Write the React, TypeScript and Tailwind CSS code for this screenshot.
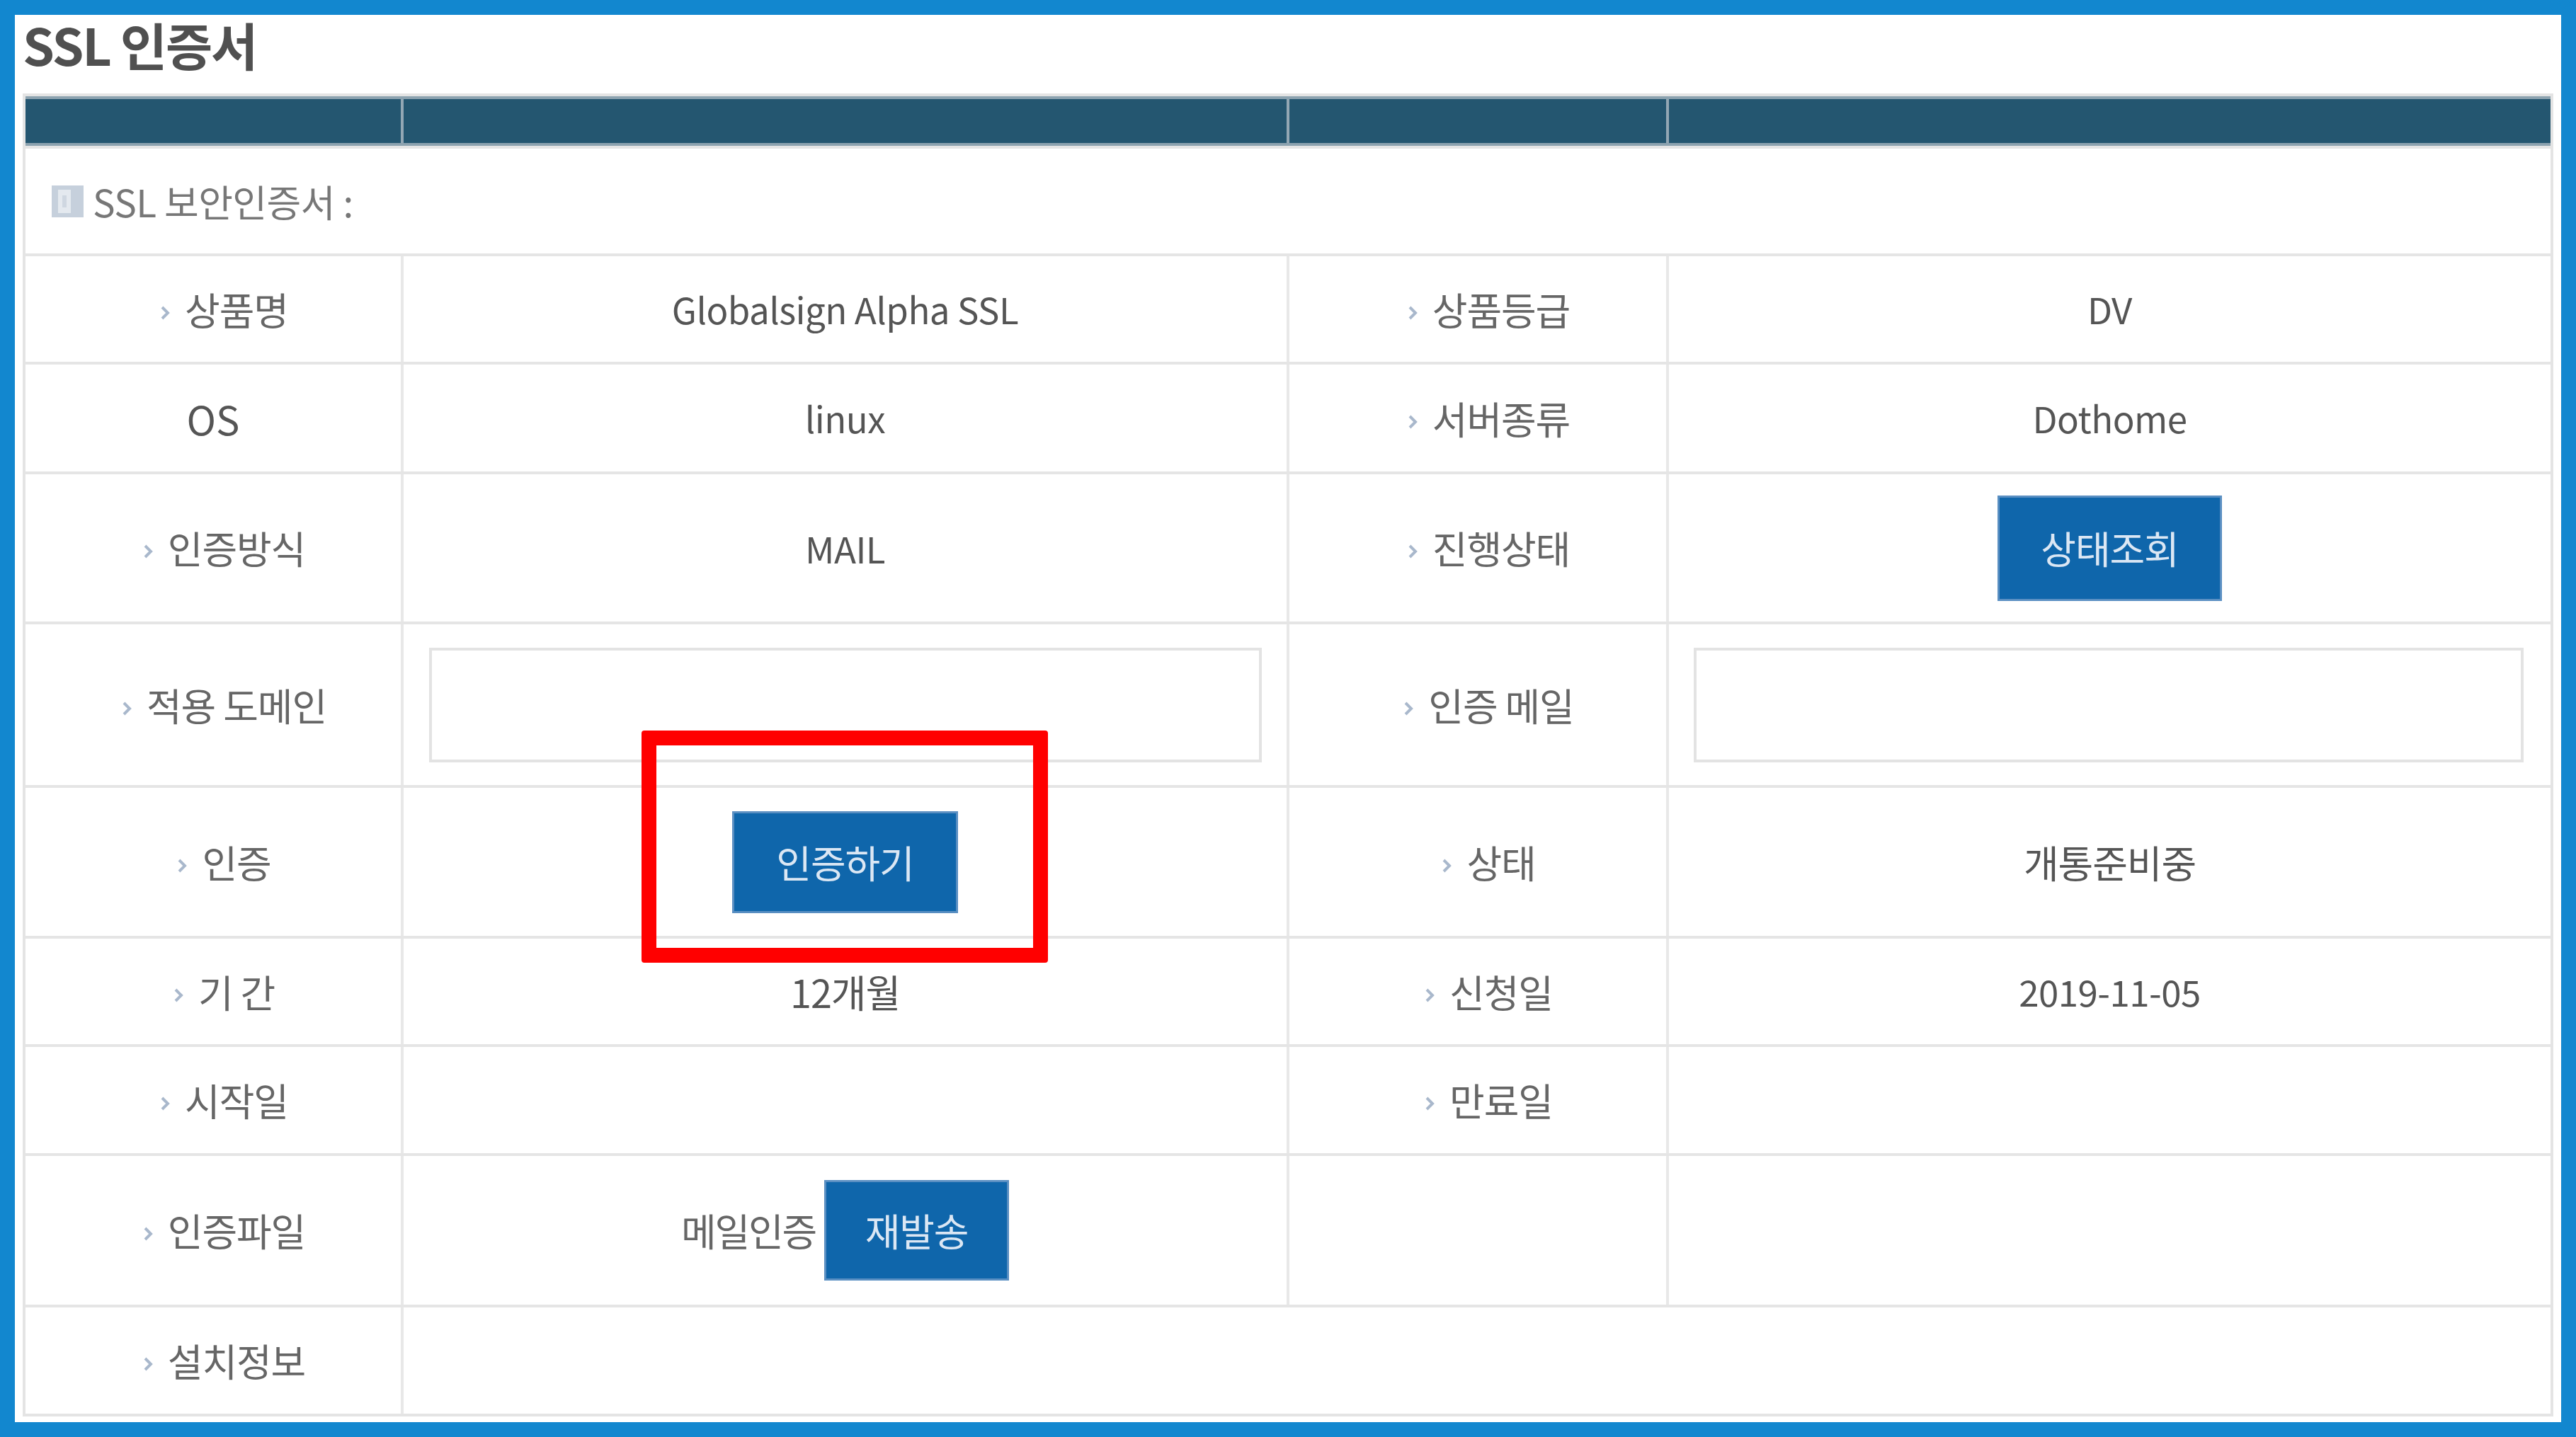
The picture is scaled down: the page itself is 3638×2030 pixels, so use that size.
const cols = 'grid grid-cols-[530px_1251px_536px_1fr]'

function Chevron() {
  return (
    <svg width="16" height="24" viewBox="0 0 16 24" className="mt-[10px] shrink-0">
      <path d="M4 4 L12 12 L4 20" stroke="#a9b8cc" strokeWidth="4" fill="none" />
    </svg>
  )
}

function Label({ text, arrow = true }: { text: string; arrow?: boolean }) {
  return (
    <div className={`flex items-center justify-center ${arrow ? 'pl-[30px]' : ''}`}>
      {arrow && <Chevron />}
      <span
        className={`${arrow ? 'ml-[20px]' : ''} text-[54px] tracking-[-0.02em] text-[#666] leading-none whitespace-pre`}
      >
        {text}
      </span>
    </div>
  )
}

function Value({ text, latin = false }: { text: string; latin?: boolean }) {
  return (
    <div className="flex items-center justify-center border-l-[4px] border-[#e8e8e8]">
      <span
        className={`${latin ? 'text-[51px] tracking-[-0.01em]' : 'text-[54px] tracking-[-0.02em]'} text-[#555] leading-none`}
      >
        {text}
      </span>
    </div>
  )
}

function Cell({ children }: { children?: React.ReactNode }) {
  return (
    <div className="flex items-center justify-center border-l-[4px] border-[#e8e8e8]">{children}</div>
  )
}

function BlueButton({ text, size }: { text: string; size: string }) {
  return (
    <button
      className={`${size} flex items-center justify-center bg-[#0f66ab] border-[3px] border-[#5a8fc2] text-[#dbe7f4] text-[54px] tracking-[-0.02em] leading-none`}
    >
      {text}
    </button>
  )
}

function InputBox() {
  return <div className="w-full h-[162px] border-[4px] border-[#e3e3e3] bg-white" />
}

export default function App() {
  return (
    <div className="relative w-[3638px] h-[2030px] border-[21px] border-[#1287cf] bg-white font-['Noto_Sans_CJK_KR',sans-serif]">
      <div className="px-[11px]">
        <div className="h-[111px] pt-[5px]">
          <h1 className="text-[72px] font-bold leading-none tracking-[-0.03em] text-[#505050]">SSL 인증서</h1>
        </div>

        <div className="border-[4px] border-[#e4e4e4]">
          {/* header bar */}
          <div className={`${cols} h-[70px] bg-[#245670] border-y-[4px] border-[#8ca2af]`}>
            <div />
            <div className="border-l-[4px] border-[#93a7b4]" />
            <div className="border-l-[4px] border-[#93a7b4]" />
            <div className="border-l-[4px] border-[#93a7b4]" />
          </div>

          <div className="h-[152px] border-t-[4px] border-[#e5e5e5] flex items-center pl-[37px]">
            <svg width="45" height="45" viewBox="0 0 45 45" className="shrink-0">
              <rect x="0" y="0" width="45" height="45" fill="#c6d0dc" />
              <rect x="9" y="6" width="18" height="33" fill="#e4e9ef" />
              <rect x="15" y="14" width="6" height="17" fill="#cfd7e1" />
            </svg>
            <span className="ml-[13px] text-[53px] tracking-[-0.01em] text-[#777] leading-none">SSL 보안인증서 :</span>
          </div>

          <div className={`${cols} h-[153px] border-t-[4px] border-[#e5e5e5]`}>
            <Label text="상품명" />
            <Value text="Globalsign Alpha SSL" latin />
            <Cell><Label text="상품등급" /></Cell>
            <Value text="DV" latin />
          </div>

          <div className={`${cols} h-[155px] border-t-[4px] border-[#e5e5e5]`}>
            <div className="flex items-center justify-center">
              <span className="text-[56px] text-[#555] leading-none">OS</span>
            </div>
            <Value text="linux" latin />
            <Cell><Label text="서버종류" /></Cell>
            <Value text="Dothome" latin />
          </div>

          <div className={`${cols} h-[212px] border-t-[4px] border-[#e5e5e5]`}>
            <Label text="인증방식" />
            <Value text="MAIL" latin />
            <Cell><Label text="진행상태" /></Cell>
            <Cell><BlueButton text="상태조회" size="w-[317px] h-[149px]" /></Cell>
          </div>

          <div className={`${cols} h-[231px] border-t-[4px] border-[#e5e5e5]`}>
            <Label text="적용 도메인" />
            <div className="flex items-center border-l-[4px] border-[#e8e8e8] pl-[36px] pr-[35px]">
              <InputBox />
            </div>
            <Cell><Label text="인증 메일" /></Cell>
            <div className="flex items-center border-l-[4px] border-[#e8e8e8] pl-[35px] pr-[38px]">
              <InputBox />
            </div>
          </div>

          <div className={`${cols} h-[213px] border-t-[4px] border-[#e5e5e5]`}>
            <Label text="인증" />
            <Cell><BlueButton text="인증하기" size="w-[319px] h-[144px]" /></Cell>
            <Cell><Label text="상태" /></Cell>
            <Value text="개통준비중" />
          </div>

          <div className={`${cols} h-[153px] border-t-[4px] border-[#e5e5e5]`}>
            <Label text="기 간" />
            <Value text="12개월" />
            <Cell><Label text="신청일" /></Cell>
            <Value text="2019-11-05" latin />
          </div>

          <div className={`${cols} h-[154px] border-t-[4px] border-[#e5e5e5]`}>
            <Label text="시작일" />
            <Cell />
            <Cell><Label text="만료일" /></Cell>
            <Cell />
          </div>

          <div className={`${cols} h-[214px] border-t-[4px] border-[#e5e5e5]`}>
            <Label text="인증파일" />
            <Cell>
              <span className="text-[54px] tracking-[-0.04em] text-[#666] leading-none">메일인증</span>
              <div className="ml-[12px]">
                <BlueButton text="재발송" size="w-[261px] h-[142px]" />
              </div>
            </Cell>
            <Cell />
            <Cell />
          </div>

          <div className="grid grid-cols-[530px_1fr] h-[154px] border-t-[4px] border-[#e5e5e5]">
            <Label text="설치정보" />
            <Cell />
          </div>
        </div>
      </div>

      {/* red highlight around the 인증하기 button */}
      <div className="absolute left-[885px] top-[1011px] w-[574px] h-[328px] border-[21px] border-[#ff0000] rounded-[4px]" />
    </div>
  )
}
